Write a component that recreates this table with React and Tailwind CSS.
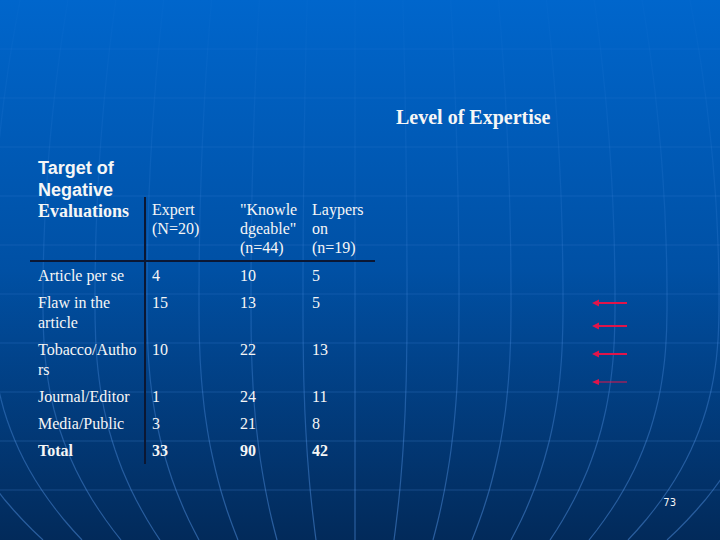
import React from "react";

const SERIF = "font-['Liberation_Serif','Times_New_Roman',serif]";

const rows = [
  { label: ["Article per se"], vals: ["4", "10", "5"] },
  { label: ["Flaw in the", "article"], vals: ["15", "13", "5"] },
  { label: ["Tobacco/Autho", "rs"], vals: ["10", "22", "13"] },
  { label: ["Journal/Editor"], vals: ["1", "24", "11"] },
  { label: ["Media/Public"], vals: ["3", "21", "8"] },
  { label: ["Total"], vals: ["33", "90", "42"], bold: true },
];

function Background() {
  const meridians = [];
  for (let k = -8; k <= 8; k++) {
    const d = k * 52;
    const pts = [];
    for (let y = 0; y <= 540; y += 10) {
      let g;
      if (y < 300) {
        const t = (300 - y) / 300;
        g = 1 - 0.08 * t * t;
      } else {
        const t = (y - 300) / 240;
        g = 1 - 0.25 * Math.pow(t, 2.5);
      }
      pts.push(`${(355 + d * g).toFixed(1)},${y}`);
    }
    meridians.push(pts.join(" "));
  }
  const hLines = [49, 98, 147, 196, 245, 294, 343, 392, 441, 490];
  return (
    <svg className="absolute inset-0" width="720" height="540" viewBox="0 0 720 540">
      <defs>
        <linearGradient id="mg" gradientUnits="userSpaceOnUse" x1="0" y1="0" x2="0" y2="540">
          <stop offset="0" stopColor="#6aaaff" stopOpacity="0.02" />
          <stop offset="0.4" stopColor="#6aaaff" stopOpacity="0.12" />
          <stop offset="1" stopColor="#5a9cf0" stopOpacity="0.45" />
        </linearGradient>
      </defs>
      {hLines.map((y) => (
        <line key={y} x1="0" y1={y} x2="720" y2={y} stroke="#5c9cf0" strokeOpacity={0.08 + (y / 540) * 0.2} strokeWidth="1" />
      ))}
      {meridians.map((p, i) => (
        <polyline key={i} points={p} fill="none" stroke="url(#mg)" strokeWidth="1.2" />
      ))}
    </svg>
  );
}

function Arrows() {
  const ys = [303, 326, 354, 382];
  return (
    <svg className="absolute left-[585px] top-[290px]" width="50" height="100" viewBox="585 290 50 100">
      {ys.map((y, i) => {
        const thin = i === 3;
        return (
          <g key={y}>
            <line x1="627" y1={y} x2="597" y2={y} stroke="#e0144a" strokeWidth={thin ? 1 : 2} />
            <polygon points={`592,${y} 599,${y - (thin ? 3 : 3.5)} 599,${y + (thin ? 3 : 3.5)}`} fill="#e0144a" />
          </g>
        );
      })}
    </svg>
  );
}

export default function App() {
  return (
    <div className="relative w-[720px] h-[540px] overflow-hidden bg-linear-to-b from-[#0066cc] via-[#0050a4] to-[#022a5a] text-[#f6f6f6]">
      <Background />
      <Arrows />
      <div className="relative flex flex-col">
        <div className={`${SERIF} ml-[396px] mt-[105px] text-[20px] leading-[24px] font-bold`}>
          Level of Expertise
        </div>
        <div className="ml-[38px] mt-[28px] mb-[-4px] font-['Liberation_Sans',Arial,sans-serif] font-bold text-[18px] leading-[22px]">
          <div>Target of</div>
          <div>Negative</div>
        </div>
        <div className={`${SERIF} ml-[30px] grid grid-cols-[116px_87px_72px_70px] text-[16px]`}>
          <div className="border-r-2 border-b-2 border-[#0b1733] pl-[8px] pt-[5px] pb-[1px] leading-[19px] font-bold text-[18px]">
            Evaluations
          </div>
          <div className="border-b-2 border-[#0b1733] pl-[6px] pt-[3px] pb-[3px] leading-[19px]">
            <div>Expert</div>
            <div>(N=20)</div>
          </div>
          <div className="border-b-2 border-[#0b1733] pl-[7px] pt-[3px] pb-[3px] leading-[19px]">
            <div>"Knowle</div>
            <div>dgeable"</div>
            <div>(n=44)</div>
          </div>
          <div className="border-b-2 border-[#0b1733] pl-[7px] pt-[3px] pb-[3px] leading-[19px]">
            <div>Laypers</div>
            <div>on</div>
            <div>(n=19)</div>
          </div>
          {rows.map((r, i) => (
            <React.Fragment key={i}>
              <div className={`border-r-2 border-[#0b1733] pl-[8px] pt-[4px] pb-[3px] leading-[20px] ${r.bold ? "font-bold" : ""}`}>
                {r.label.map((l, j) => (
                  <div key={j}>{l}</div>
                ))}
              </div>
              <div className={`pl-[6px] pt-[4px] pb-[3px] leading-[20px] ${r.bold ? "font-bold" : ""}`}>{r.vals[0]}</div>
              <div className={`pl-[7px] pt-[4px] pb-[3px] leading-[20px] ${r.bold ? "font-bold" : ""}`}>{r.vals[1]}</div>
              <div className={`pl-[7px] pt-[4px] pb-[3px] leading-[20px] ${r.bold ? "font-bold" : ""}`}>{r.vals[2]}</div>
            </React.Fragment>
          ))}
        </div>
        <div className="flex justify-end pr-[44px] mt-[33px] font-['DejaVu_Sans',Verdana,sans-serif] text-[10px] leading-[12px]">
          73
        </div>
      </div>
    </div>
  );
}
